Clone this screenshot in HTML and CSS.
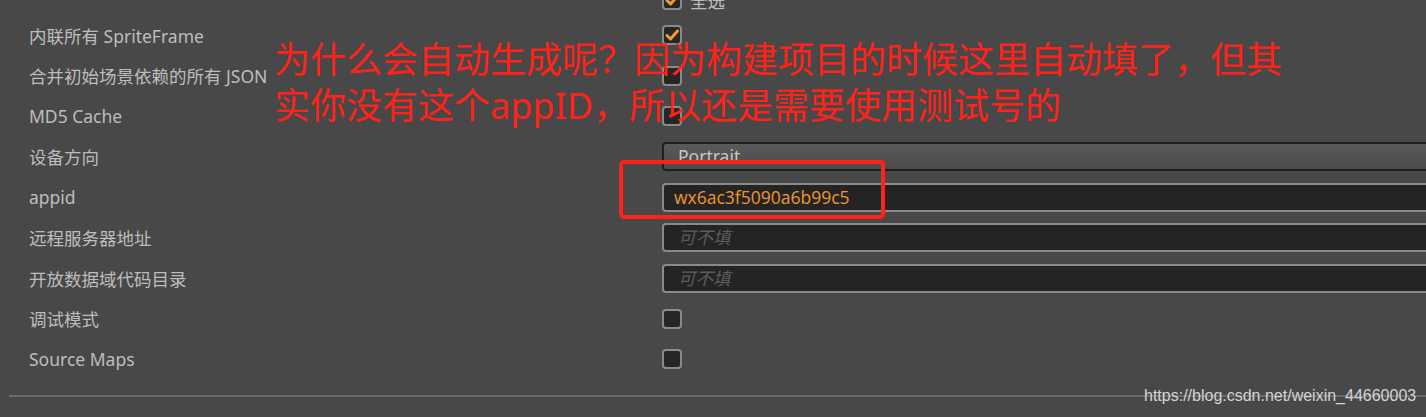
FILE: index.html
```html
<!DOCTYPE html>
<html lang="zh-CN">
<head>
  <meta charset="UTF-8" />
  <title>构建发布 - 微信小游戏</title>
  <link rel="stylesheet" href="styles.css">
</head>
<body>
<div class="panel">
  <div class="row first">
    <div class="label"></div>
    <div class="field">
      <span class="check on"><svg viewBox="0 0 20 20"><path d="M5 10.5l3.5 3.5 7-8" /></svg></span>
      <span class="check-text">全选</span>
    </div>
  </div>
  <div class="row">
    <div class="label">内联所有 SpriteFrame</div>
    <div class="field"><span class="check on"><svg viewBox="0 0 20 20"><path d="M5 10.5l3.5 3.5 7-8" /></svg></span></div>
  </div>
  <div class="row">
    <div class="label">合并初始场景依赖的所有 JSON</div>
    <div class="field"><span class="check"></span></div>
  </div>
  <div class="row">
    <div class="label">MD5 Cache</div>
    <div class="field"><span class="check"></span></div>
  </div>
  <div class="row">
    <div class="label">设备方向</div>
    <div class="field"><div class="select">Portrait</div></div>
  </div>
  <div class="row">
    <div class="label">appid</div>
    <div class="field"><div class="input value">wx6ac3f5090a6b99c5</div></div>
  </div>
  <div class="row">
    <div class="label">远程服务器地址</div>
    <div class="field"><div class="input empty">可不填</div></div>
  </div>
  <div class="row">
    <div class="label">开放数据域代码目录</div>
    <div class="field"><div class="input empty">可不填</div></div>
  </div>
  <div class="row">
    <div class="label">调试模式</div>
    <div class="field"><span class="check"></span></div>
  </div>
  <div class="row">
    <div class="label">Source Maps</div>
    <div class="field"><span class="check"></span></div>
  </div>
  <div class="divider"></div>
</div>

<div class="note">为什么会自动生成呢？因为构建项目的时候这里自动填了，但其<br>实你没有这个appID，所以还是需要使用测试号的</div>
<div class="highlight"></div>
<div class="watermark">https://blog.csdn.net/weixin_44660003</div>
</body>
</html>
```

FILE: styles.css
```css
body {
  margin: 0;
  background: #484848;
  font-family: 'Noto Sans', 'Noto Sans CJK SC', sans-serif;
  color: #bdbdbd;
  overflow: hidden;
  height: 417px;
  position: relative;
}
.panel {
  padding-left: 29px;
}
.row {
  display: flex;
  align-items: center;
  height: 40.5px;
}
.row.first {
  height: 30px;
  margin-top: -15px;
}
.label {
  width: 633px;
  flex: none;
  font-size: 17.5px;
  white-space: nowrap;
}
.field {
  flex: 1;
  display: flex;
  align-items: center;
  margin-right: -20px;
}
.check {
  width: 20px;
  height: 20px;
  box-sizing: border-box;
  border: 2px solid #8a8a8a;
  border-radius: 4px;
  background: #262626;
  display: inline-block;
}
.check svg {
  display: none;
  width: 20px;
  height: 20px;
  margin: -2px;
}
.check.on svg {
  display: block;
}
.check svg path {
  fill: none;
  stroke: #f39c2c;
  stroke-width: 3;
  stroke-linecap: round;
  stroke-linejoin: round;
}
.check-text {
  margin-left: 8px;
  font-size: 17.5px;
}
.select, .input {
  flex: 1;
  height: 29px;
  box-sizing: border-box;
  border-radius: 4px;
  font-size: 17.5px;
  line-height: 25px;
}
.select {
  border: 2px solid #1f1f1f;
  background: linear-gradient(#5a5a5a, #4b4b4b);
  color: #c6c6c6;
  padding-left: 14px;
}
.input {
  border: 2px solid #8a8a8a;
  background: #242424;
  padding-left: 10px;
}
.input.value {
  color: #f0962c;
  font-family: 'Open Sans', sans-serif;
}
.input.empty {
  color: #5c5c5c;
  font-style: italic;
  padding-left: 14px;
}
.divider {
  height: 2px;
  background: #6a6a6a;
  margin: 15px 0 0 -20px;
}
.note {
  position: absolute;
  left: 274px;
  top: 37px;
  font-size: 36px;
  line-height: 46px;
  color: #ff2219;
  white-space: nowrap;
}
.highlight {
  position: absolute;
  left: 619px;
  top: 160px;
  width: 266px;
  height: 59px;
  box-sizing: border-box;
  border: 4px solid #ff2219;
  border-radius: 5px;
}
.watermark {
  position: absolute;
  left: 1144px;
  top: 387px;
  font-family: 'Liberation Sans', sans-serif;
  font-size: 16px;
  color: #d4d4d4;
}
```
